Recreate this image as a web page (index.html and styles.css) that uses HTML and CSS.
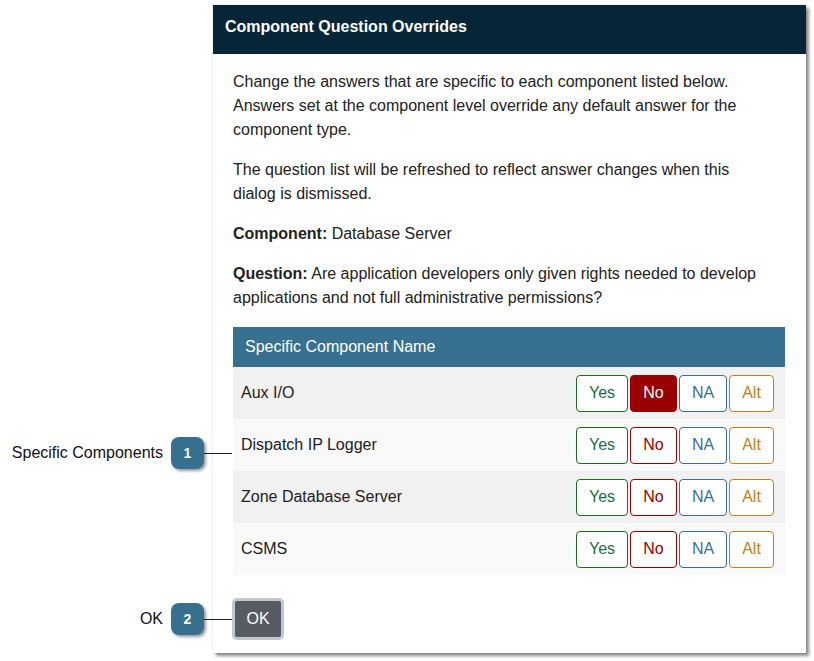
FILE: index.html
```html
<!DOCTYPE html>
<html>
<head>
<meta charset="utf-8">
<link rel="stylesheet" href="styles.css">
</head>
<body>
<div class="stage">
  <div class="dialog">
    <div class="dlg-head">Component Question Overrides</div>
    <div class="dlg-body">
      <p>Change the answers that are specific to each component listed below. Answers set at the component level override any default answer for the component type.</p>
      <p>The question list will be refreshed to reflect answer changes when this dialog is dismissed.</p>
      <p><b>Component:</b> Database Server</p>
      <p><b>Question:</b> Are application developers only given rights needed to develop applications and not full administrative permissions?</p>
      <div class="tbl">
        <div class="tbl-head">Specific Component Name</div>
        <div class="row odd">
          <span class="name">Aux I/O</span>
          <div class="btns"><span class="b yes">Yes</span><span class="b no on">No</span><span class="b na">NA</span><span class="b alt">Alt</span></div>
        </div>
        <div class="row even">
          <span class="name">Dispatch IP Logger</span>
          <div class="btns"><span class="b yes">Yes</span><span class="b no">No</span><span class="b na">NA</span><span class="b alt">Alt</span></div>
        </div>
        <div class="row odd">
          <span class="name">Zone Database Server</span>
          <div class="btns"><span class="b yes">Yes</span><span class="b no">No</span><span class="b na">NA</span><span class="b alt">Alt</span></div>
        </div>
        <div class="row even">
          <span class="name">CSMS</span>
          <div class="btns"><span class="b yes">Yes</span><span class="b no">No</span><span class="b na">NA</span><span class="b alt">Alt</span></div>
        </div>
      </div>
      <div class="ok">OK</div>
    </div>
  </div>
  <div class="callout c1"><span class="lbl">Specific Components</span><span class="badge">1</span><span class="line"></span></div>
  <div class="callout c2"><span class="lbl">OK</span><span class="badge">2</span><span class="line"></span></div>
</div>
</body>
</html>
```
FILE: styles.css
```css
html, body { margin: 0; padding: 0; background: #fff; }
body { font-family: "Liberation Sans", Arial, sans-serif; color: #222; }
.stage { position: relative; width: 814px; height: 661px; }
.dialog {
  position: absolute; left: 213px; top: 5px; width: 593px; height: 648px;
  background: #fff; box-shadow: 3px 3px 3px rgba(0,0,0,0.45), 0 0 2px rgba(0,0,0,0.15);
  display: flex; flex-direction: column;
}
.dlg-head {
  height: 49px; background: #062637; color: #fff; font-weight: bold; font-size: 16px;
  display: flex; align-items: center; padding-left: 12px; padding-bottom: 5px; box-sizing: border-box;
}
.dlg-body { padding: 16px 21px 0 20px; font-size: 16px; line-height: 24px; color: #222; }
.dlg-body p { margin: 0 0 16px; max-width: 535px; }
.tbl { margin-top: 17px; }
.tbl-head {
  height: 40px; background: #37718f; color: #fff; font-size: 16px;
  display: flex; align-items: center; padding-left: 12px;
}
.row { height: 52px; display: flex; align-items: center; justify-content: space-between; padding: 0 11px 0 8px; }
.row.odd { background: #f1f1f1; }
.row.even { background: #f9f9f9; }
.name { color: #222; }
.btns { display: flex; gap: 2px; }
.b {
  box-sizing: border-box; height: 37px; display: flex; align-items: center; justify-content: center;
  border: 1px solid; border-radius: 4px; background: #fff; font-size: 16px;
}
.yes { width: 52px; border-color: #1d6b1d; color: #1d6b4a; }
.no { width: 47px; border-color: #990000; color: #990000; }
.no.on { background: #990000; color: #fff; }
.na { width: 48px; border-color: #3a6f92; color: #3a6f92; }
.alt { width: 45px; border-color: #c08216; color: #c08216; }
.ok {
  margin-top: 23px; margin-left: -1px; width: 52px; height: 42px; box-sizing: border-box;
  background: #555c63; border: 3px solid #c3c7cb; border-radius: 5px; color: #fff;
  display: flex; align-items: center; justify-content: center; font-size: 16px;
}
.callout { position: absolute; right: 582px; display: flex; align-items: center; }
.c1 { top: 437px; }
.c2 { top: 603px; }
.lbl { font-size: 16px; color: #111; margin-right: 8px; }
.badge {
  width: 33px; height: 32px; background: #36708e; border-radius: 8px; color: #fff;
  font-weight: bold; font-size: 14px; display: flex; align-items: center; justify-content: center;
  box-shadow: 2px 2px 3px rgba(0,0,0,0.4);
}
.line { width: 28px; height: 1px; background: #222; }
```
